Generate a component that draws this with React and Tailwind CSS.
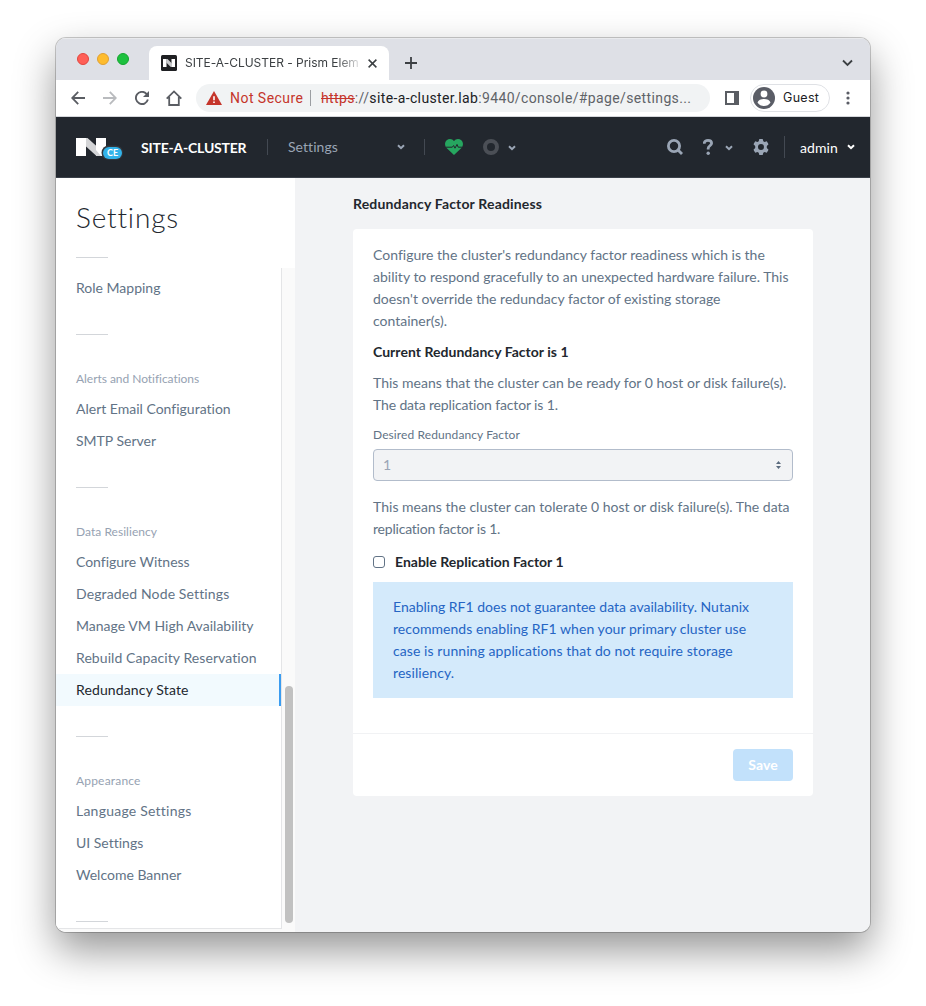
function Chevron({ className }) {
  return (
    <svg className={className} width="8" height="6" viewBox="0 0 8 6" fill="none" stroke="currentColor" strokeWidth="2">
      <path d="M1 1.2 4 4.2 7 1.2" />
    </svg>
  );
}

function TabStrip() {
  return (
    <div className="flex h-[42px] shrink-0 items-end border-t border-[#e9eaed] bg-[#dee0e6]">
      <div className="flex h-[42px] w-[93px] shrink-0 items-center gap-2 pl-[21px]">
        <span className="size-3 rounded-full border border-[#e2463f] bg-[#ff5f57]" />
        <span className="size-3 rounded-full border border-[#e0a033] bg-[#febc2e]" />
        <span className="size-3 rounded-full border border-[#14a62f] bg-[#1dc13f]" />
      </div>
      <div className="flex h-[34px] w-[240px] shrink-0 items-center rounded-t-lg bg-white pl-3">
        <svg className="shrink-0" width="16" height="16" viewBox="0 0 16 16">
          <rect width="16" height="16" rx="1.5" fill="#1f2023" />
          <path d="M2 4h3.500v8H2zM10.500 4H14v8h-3.500z" fill="#fff" />
          <path d="M5.200 4h1.300L11 8.500V12H9.800L5.200 7.600z" fill="#c9cacc" />
        </svg>
        <div className="ml-2 w-[174px] overflow-hidden whitespace-nowrap font-['Inter',sans-serif] text-[12px] tracking-[-0.03px] text-[#3c4043] [mask-image:linear-gradient(to_right,black_152px,transparent_178px)]">
          SITE-A-CLUSTER - Prism Elem
        </div>
        <svg className="ml-[9px] shrink-0" width="9" height="9" viewBox="0 0 9 9" stroke="#3c4043" strokeWidth="1.500">
          <path d="M.6.6l7.800 7.800M8.400.6.6 8.400" />
        </svg>
      </div>
      <svg className="mb-[11px] ml-4" width="12" height="12" viewBox="0 0 12 12" stroke="#3c4043" strokeWidth="1.800">
        <path d="M6 0v12M0 6h12" />
      </svg>
      <svg className="mr-[17px] mb-[13px] ml-auto" width="11" height="8" viewBox="0 0 11 8" fill="none" stroke="#3c4043" strokeWidth="1.800">
        <path d="M1 1.500l4.500 4.500L10 1.500" />
      </svg>
    </div>
  );
}

function Toolbar() {
  return (
    <div className="flex h-[37px] shrink-0 items-center border-b border-[#d5d7db] bg-white pl-[15px]">
      <div className="flex items-center gap-[18px]">
        <svg width="14" height="14" viewBox="0 0 14 14" fill="none" stroke="#5a5d63" strokeWidth="1.800">
          <path d="M14 7H1.500M7.200.8 1.200 7l6 6.200" />
        </svg>
        <svg width="14" height="14" viewBox="0 0 14 14" fill="none" stroke="#b9bbbe" strokeWidth="1.800">
          <path d="M0 7h12.500M6.800.8l6 6.200-6 6.200" />
        </svg>
        <svg width="14" height="14" viewBox="0 0 14 14" fill="none" stroke="#5a5d63" strokeWidth="1.900">
          <path d="M12.900 8.600A6.100 6.100 0 1 1 11.500 2.800L13 4.300" />
          <path d="M14 0v6H8z" fill="#5a5d63" stroke="none" />
        </svg>
        <svg className="-ml-px" width="16" height="16" viewBox="0 0 16 16" fill="none" stroke="#5a5d63" strokeWidth="1.800">
          <path d="M.7 8.600 8 1.400l7.300 7.200M3.200 7v8h9.600V7" />
        </svg>
      </div>
      <div className="ml-[14px] flex h-7 w-[514px] items-center rounded-full bg-[#f1f3f4] pl-[10px] font-['Roboto',sans-serif] text-[14px]">
        <svg width="16" height="14" viewBox="0 0 16 14">
          <path d="M8 0l8 14H0z" fill="#c5352b" />
          <path d="M7.200 5.200h1.600v4H7.200zM7.200 10.400h1.600V12H7.200z" fill="#fff" />
        </svg>
        <span className="ml-2 w-[73px] whitespace-nowrap tracking-[0.46px] text-[#c5352b]">Not Secure</span>
        <span className="ml-[7px] h-4 w-px bg-[#9b9ea2]" />
        <span className="ml-[10px] whitespace-nowrap tracking-[0.37px] text-[#5f6368]">
          <span className="text-[#c5352b] line-through">https</span>://<span className="text-[#202124]">site-a-cluster.lab</span>:9440/console/#page/settings...
        </span>
      </div>
      <svg className="ml-[15px]" width="14" height="14" viewBox="0 0 14 14">
        <path fillRule="evenodd" d="M0 0h14v14H0zM2 2v10h7V2z" fill="#5a5d63" />
      </svg>
      <div className="ml-[11px] flex h-7 w-20 items-center rounded-full border border-[#dfe1e5] pl-[2px]">
        <svg width="22" height="22" viewBox="0 0 22 22">
          <circle cx="11" cy="11" r="11" fill="#5a5d66" />
          <circle cx="11" cy="7" r="3.400" fill="#fff" />
          <path d="M4.500 15.500C5.200 12.900 8 11.900 11 11.900s5.800 1 6.500 3.600C16 17.900 13.700 19 11 19s-5-1.100-6.500-3.500z" fill="#fff" />
        </svg>
        <span className="ml-2 font-['Inter',sans-serif] text-[12.500px] tracking-[0.3px] text-[#202124]">Guest</span>
      </div>
      <svg className="ml-4" width="4" height="14" viewBox="0 0 4 14" fill="#5a5d66">
        <circle cx="2" cy="2" r="1.600" />
        <circle cx="2" cy="7" r="1.600" />
        <circle cx="2" cy="12" r="1.600" />
      </svg>
    </div>
  );
}

function Header() {
  return (
    <div className="flex h-[61px] shrink-0 items-center border-b border-[#3a4049] bg-[#22272e] pr-[15px] pl-5 text-[#9aa5b5]">
      <svg className="mt-[3px]" width="47" height="22" viewBox="0 0 47 22">
        <path d="M0 0h10v18H0zM20 0h10v18H20z" fill="#fff" />
        <path d="M10 0h1.500L26 13v5h-5.500L10 8.500z" fill="#d4d5d7" />
        <path d="M20 0h10v18h-5L20 12z" fill="#fff" />
        <rect x="25.500" y="7.500" width="21.500" height="14.500" rx="7.250" fill="#33383e" />
        <rect x="27" y="9" width="19" height="12" rx="6" fill="#32b3ea" />
        <text x="36.500" y="18.200" textAnchor="middle" fill="#fff" fontFamily="Lato, sans-serif" fontWeight="700" fontSize="9">CE</text>
      </svg>
      <span className="ml-[18px] w-[106px] whitespace-nowrap text-[14px] font-bold tracking-[-0.2px] text-white">SITE-A-CLUSTER</span>
      <span className="ml-5 h-4 w-px bg-[#434952]" />
      <span className="ml-5 w-[109px] pb-px text-[14px] tracking-[0.05px]">Settings</span>
      <Chevron />
      <span className="ml-[19px] h-4 w-px bg-[#434952]" />
      <svg className="ml-5" width="18" height="16" viewBox="0 0 18 16">
        <path d="M9 16 1.600 9C-.6 6.600-.4 3 1.700 1.300 4-.6 7.400-.3 9 2.300 10.600-.3 14-.6 16.300 1.300c2.100 1.700 2.300 5.300.1 7.700z" fill="#26a65f" />
        <path d="M1 8.200h6.300l1.300-1.700 1.400 2.700 2-3.800 1.200 2.800H17" fill="none" stroke="#22272e" strokeWidth="1" />
      </svg>
      <svg className="ml-5" width="16" height="16" viewBox="0 0 16 16">
        <circle cx="8" cy="8" r="6" fill="none" stroke="#4b4f56" strokeWidth="4" />
      </svg>
      <Chevron className="mt-px ml-[9px]" />

      <svg className="ml-auto" width="16" height="16" viewBox="0 0 16 16" fill="none" stroke="currentColor" strokeWidth="2.800">
        <circle cx="7" cy="7" r="5.600" />
        <path d="M11 11l4 4" />
      </svg>
      <svg className="ml-5" width="10" height="16" viewBox="0 0 10 16" fill="none" stroke="currentColor" strokeWidth="2.800">
        <path d="M1.300 4.800V4.200C1.300 2.500 3 1.400 5 1.400s3.600 1.100 3.600 2.900c0 2.300-3.400 2.600-3.400 5v1.200" />
        <circle cx="5.200" cy="14.200" r="1.700" fill="currentColor" stroke="none" />
      </svg>
      <Chevron className="mt-px ml-3" />
      <svg className="ml-5" width="16" height="16" viewBox="0 0 16 16">
        <path
          fillRule="evenodd"
          fill="currentColor"
          d="M6.300 0h3.400l.6 2.300 1.200.7 2.300-.7 1.700 2.900-1.700 1.700v2.200l1.700 1.700-1.700 2.900-2.300-.7-1.200.7L9.700 16H6.300l-.6-2.300-1.200-.7-2.300.7L.5 10.800l1.700-1.700V6.900L.5 5.200l1.700-2.900 2.300.7 1.200-.7zM8 5a3 3 0 1 0 0 6 3 3 0 0 0 0-6z"
        />
      </svg>
      <span className="ml-[15px] h-[22px] w-px bg-[#434952]" />
      <span className="ml-[15px] w-[38px] text-[14px] tracking-[0.1px] text-white">admin</span>
      <Chevron className="ml-[9px] text-white" />
    </div>
  );
}

const sections = [
  { title: null, items: [{ label: "Role Mapping", tracking: "tracking-[0px]" }] },
  {
    title: "Alerts and Notifications",
    titleTracking: "tracking-[-0.04px]",
    items: [
      { label: "Alert Email Configuration", tracking: "tracking-[0px]" },
      { label: "SMTP Server", tracking: "tracking-[0px]" },
    ],
  },
  {
    title: "Data Resiliency",
    titleTracking: "tracking-[0.04px]",
    items: [
      { label: "Configure Witness", tracking: "tracking-[-0.02px]" },
      { label: "Degraded Node Settings", tracking: "tracking-[0.13px]" },
      { label: "Manage VM High Availability", tracking: "tracking-[0.02px]" },
      { label: "Rebuild Capacity Reservation", tracking: "tracking-[0.08px]" },
      { label: "Redundancy State", tracking: "tracking-[0.13px]", active: true },
    ],
  },
  {
    title: "Appearance",
    titleTracking: "tracking-[0.19px]",
    items: [
      { label: "Language Settings", tracking: "tracking-[0.23px]" },
      { label: "UI Settings", tracking: "tracking-[0px]" },
      { label: "Welcome Banner", tracking: "tracking-[0px]" },
    ],
  },
];

function Sidebar() {
  return (
    <aside className="flex w-[239px] shrink-0 flex-col bg-white">
      <div className="h-[90px] shrink-0 pl-5">
        <h1 className="pt-[19px] text-[28px] leading-[40px] font-light tracking-[0.82px] text-[#22272e]">Settings</h1>
        <div className="mt-5 h-px w-8 bg-[#d3d6da]" />
      </div>
      <div className="flex min-h-0 flex-1">
        <div className="flex min-w-0 flex-1 flex-col bg-[#fafafa]">
          <div className="h-[661px] overflow-hidden border-r border-b border-[#e4e5e7] bg-white pt-1">
            {sections.map((section, i) => (
              <div key={i}>
                {section.title && (
                  <div className={`flex h-[58px] items-center pt-[33px] pl-5 pb-1 text-[12px] text-[#96a2b2] ${section.titleTracking}`}>
                    {section.title}
                  </div>
                )}
                {section.items.map((item) => (
                  <div
                    key={item.label}
                    className={`flex h-8 items-center pb-[2px] pl-5 text-[14px] whitespace-nowrap ${item.tracking} ${
                      item.active ? "border-r-2 border-[#3a9cf0] bg-[#f2fafe] text-[#22272e]" : "text-[#627386]"
                    }`}
                  >
                    {item.label}
                  </div>
                ))}
                <div className="mt-[30px] ml-5 h-px w-8 bg-[#d3d6da]" />
              </div>
            ))}
          </div>
        </div>
        <div className="flex w-[13px] shrink-0 justify-center bg-[#fafafa] pt-[418px]">
          <div className="h-[237px] w-2 rounded-full bg-[#c1c1c1]" />
        </div>
      </div>
    </aside>
  );
}

function Content() {
  return (
    <main className="flex-1 bg-[#f2f3f5] pl-[58px]">
      <h2 className="pt-[15px] text-[14px] leading-[22px] font-bold tracking-[0.17px] text-[#22272e]">Redundancy Factor Readiness</h2>
      <section className="mt-[14px] flex h-[567px] w-[460px] flex-col rounded-[4px] bg-white text-[14px] leading-[22px] whitespace-nowrap text-[#627386]">
        <div className="h-[504px] px-5 pt-[15px]">
          <p>
            <span className="tracking-[0.01px]">Configure the cluster's redundancy factor readiness which is the</span>
            <br />
            <span className="tracking-[0.01px]">ability to respond gracefully to an unexpected hardware failure. This</span>
            <br />
            <span className="tracking-[0.02px]">doesn't override the redundacy factor of existing storage</span>
            <br />
            <span>container(s).</span>
          </p>
          <h3 className="mt-[9px] font-bold tracking-[0.03px] text-[#22272e]">Current Redundancy Factor is 1</h3>
          <p className="mt-[9px]">
            <span className="tracking-[0.01px]">This means that the cluster can be ready for 0 host or disk failure(s).</span>
            <br />
            <span className="tracking-[-0.14px]">The data replication factor is 1.</span>
          </p>
          <div className="mt-2 text-[12px] tracking-[0.1px]">Desired Redundancy Factor</div>
          <div className="mt-[3px] flex h-8 items-center justify-between rounded-[4px] border border-[#b2bccb] bg-[#f2f3f5] pr-[11px] pl-[9px] text-[#9aa5b5]">
            <span>1</span>
            <svg width="5" height="8" viewBox="0 0 5 8" fill="#5b6b7e">
              <path d="M2.500 0 5 3H0zM2.500 8 0 5h5z" />
            </svg>
          </div>
          <p className="mt-[15px]">
            <span className="tracking-[0.02px]">This means the cluster can tolerate 0 host or disk failure(s). The data</span>
            <br />
            <span className="tracking-[-0.21px]">replication factor is 1.</span>
          </p>
          <div className="mt-[11px] flex items-center gap-[10px]">
            <span className="size-3 rounded-[3px] border border-[#627386] bg-white" />
            <span className="font-bold text-[#22272e]">Enable Replication Factor 1</span>
          </div>
          <div className="mt-[9px] h-[116px] bg-[#d4eafb] pt-[14px] pl-5 text-[#2565c4]">
            <span>Enabling RF1 does not guarantee data availability. Nutanix</span>
            <br />
            <span className="tracking-[0.05px]">recommends enabling RF1 when your primary cluster use</span>
            <br />
            <span className="tracking-[0.08px]">case is running applications that do not require storage</span>
            <br />
            <span className="tracking-[0.08px]">resiliency.</span>
          </div>
        </div>
        <div className="flex flex-1 justify-end border-t border-[#f1f2f4] pt-[15px] pr-5">
          <button type="button" className="h-8 w-[60px] rounded-[4px] bg-[#c2e1fb] font-bold tracking-[0.1px] text-white">
            Save
          </button>
        </div>
      </section>
    </main>
  );
}

export default function App() {
  return (
    <div className="h-[1006px] w-[926px] overflow-hidden bg-white px-[56px] pt-[38px] font-['Lato',sans-serif] [font-variant-ligatures:none]">
      <div className="flex h-[894px] w-[814px] flex-col overflow-hidden rounded-[10px] bg-white shadow-[0_0_0_1px_rgba(0,0,0,0.2),0_18px_40px_rgba(0,0,0,0.42)]">
        <TabStrip />
        <Toolbar />
        <Header />
        <div className="flex min-h-0 flex-1">
          <Sidebar />
          <Content />
        </div>
      </div>
    </div>
  );
}
